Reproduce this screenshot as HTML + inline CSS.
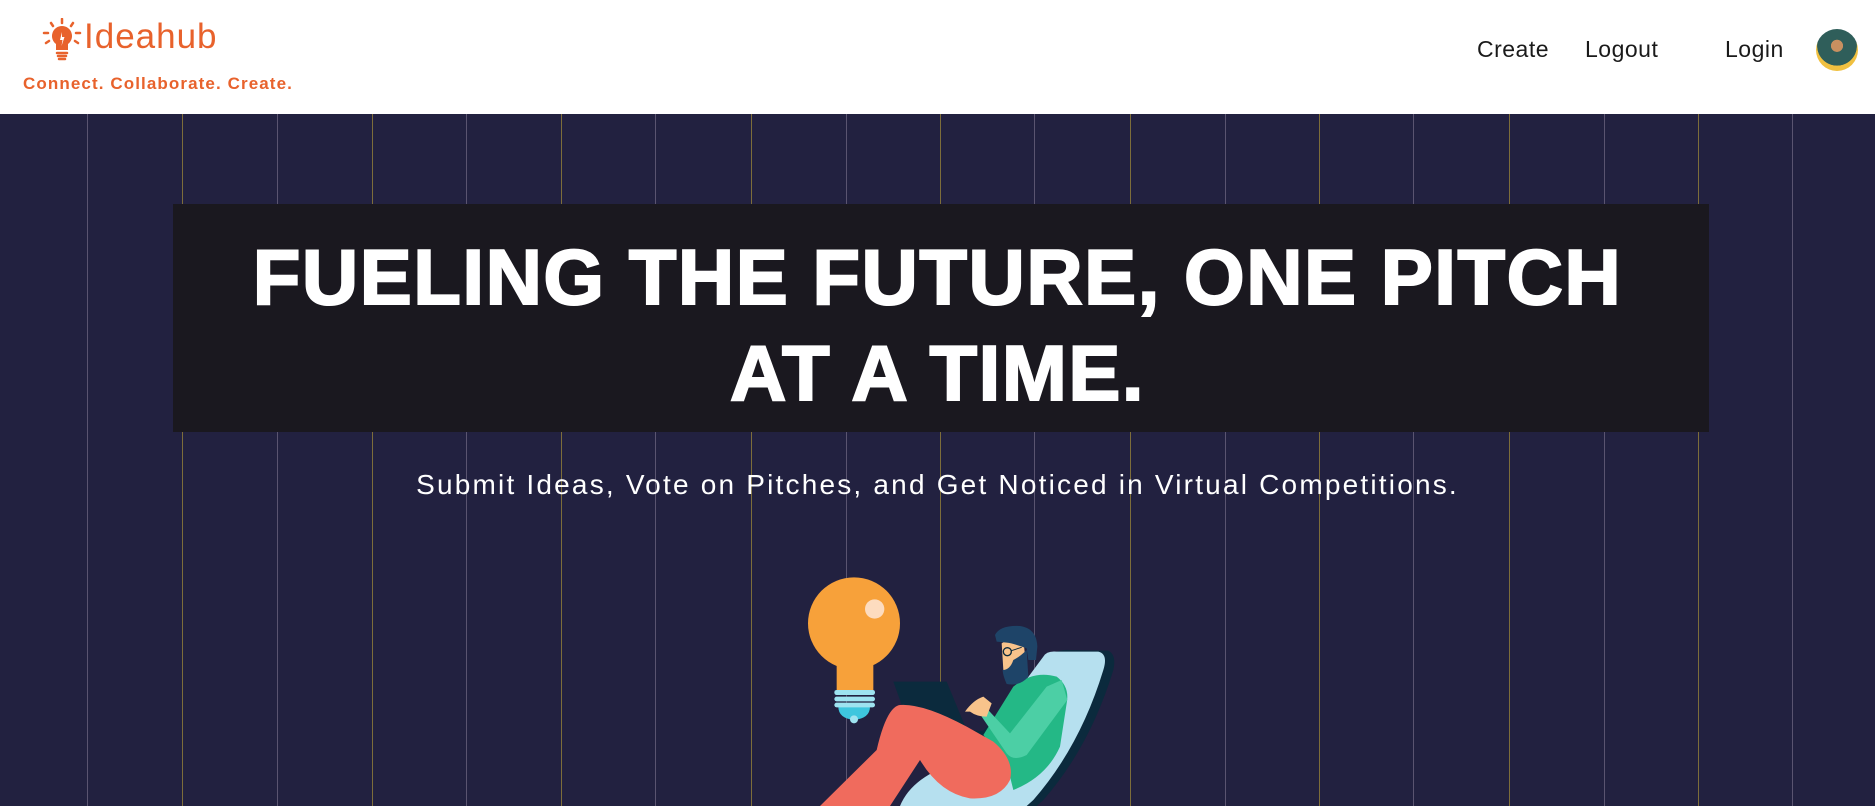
<!DOCTYPE html>
<html><head><meta charset="utf-8"><style>
*{margin:0;padding:0;box-sizing:border-box}
body{width:1875px;height:806px;overflow:hidden;background:#fff;font-family:"Liberation Sans",sans-serif;position:relative}
.hdr{position:absolute;left:0;top:0;width:1875px;height:114px;background:#fff}
.logo{position:absolute;left:84px;top:17px;font-size:35px;color:#e8622c;letter-spacing:1px}
.tag{position:absolute;left:23px;top:74px;font-size:17px;font-weight:bold;color:#e8622c;letter-spacing:1.1px}
.nav{position:absolute;top:36px;font-size:23px;color:#1a1a1a;letter-spacing:0.5px}
.hero{position:absolute;left:0;top:114px;width:1875px;height:692px;background:#222140;overflow:hidden}
.ln{position:absolute;top:0;width:1px;height:692px}
.box{position:absolute;left:173px;top:90px;width:1536px;height:228px;background:#1a181f}
.title{position:absolute;left:0;width:1875px;text-align:center;color:#fff;font-weight:900;font-size:78px;letter-spacing:1.5px;white-space:nowrap;-webkit-text-stroke:2px #fff}
.sub{position:absolute;left:0;top:355px;width:1875px;text-align:center;color:#fff;font-size:28px;letter-spacing:2.2px;white-space:nowrap}
</style></head><body>
<div class="hdr">
<svg style="position:absolute;left:42px;top:18px" width="40" height="44" viewBox="0 0 40 44">
<g stroke="#e8622c" stroke-width="2.5" stroke-linecap="round">
<line x1="20" y1="1" x2="20" y2="5"/><line x1="9" y1="5" x2="11" y2="8"/><line x1="31" y1="5" x2="29" y2="8"/>
<line x1="2" y1="15" x2="6" y2="15"/><line x1="34" y1="15" x2="38" y2="15"/><line x1="4" y1="25" x2="7" y2="23"/><line x1="36" y1="25" x2="33" y2="23"/>
<line x1="15" y1="35" x2="25" y2="35"/><line x1="16" y1="38" x2="24" y2="38"/><line x1="17" y1="41" x2="23" y2="41"/></g>
<path d="M20 8a10 10 0 0 0-6 18v6h12v-6a10 10 0 0 0-6-18z" fill="#e8622c"/>
<path d="M20 14l-2 8h2.5l-1 6 3-9h-2.5z" fill="#fff"/>
</svg>
<div class="logo">Ideahub</div>
<div class="tag">Connect. Collaborate. Create.</div>
<div class="nav" style="left:1477px">Create</div>
<div class="nav" style="left:1585px">Logout</div>
<div class="nav" style="left:1725px">Login</div>
<div style="position:absolute;left:1816px;top:29px;width:42px;height:42px;border-radius:50%;background:radial-gradient(circle at 50% 40%,#c89060 0 18%,#2f5e5a 19% 60%,#f0c040 61%);overflow:hidden"></div>
</div>
<div class="hero">
<div class="ln" style="left:87px;background:#5a5470"></div>
<div class="ln" style="left:182px;background:#7d6d3a"></div>
<div class="ln" style="left:277px;background:#5a5470"></div>
<div class="ln" style="left:372px;background:#7d6d3a"></div>
<div class="ln" style="left:466px;background:#5a5470"></div>
<div class="ln" style="left:561px;background:#7d6d3a"></div>
<div class="ln" style="left:655px;background:#5a5470"></div>
<div class="ln" style="left:751px;background:#7d6d3a"></div>
<div class="ln" style="left:846px;background:#5a5470"></div>
<div class="ln" style="left:940px;background:#7d6d3a"></div>
<div class="ln" style="left:1034px;background:#5a5470"></div>
<div class="ln" style="left:1130px;background:#7d6d3a"></div>
<div class="ln" style="left:1225px;background:#5a5470"></div>
<div class="ln" style="left:1319px;background:#7d6d3a"></div>
<div class="ln" style="left:1413px;background:#5a5470"></div>
<div class="ln" style="left:1509px;background:#7d6d3a"></div>
<div class="ln" style="left:1604px;background:#5a5470"></div>
<div class="ln" style="left:1698px;background:#7d6d3a"></div>
<div class="ln" style="left:1792px;background:#5a5470"></div>
<div class="box"></div>
<div class="title" style="top:118px">FUELING THE FUTURE, ONE PITCH</div>
<div class="title" style="top:214px">AT A TIME.</div>
<div class="sub">Submit Ideas, Vote on Pitches, and Get Noticed in Virtual Competitions.</div>
<svg style="position:absolute;left:780px;top:446px" width="360" height="246" viewBox="0 0 1080 738">
<circle cx="222" cy="190" r="138" fill="#f7a13a"/>
<rect x="170" y="260" width="110" height="135" fill="#f7a13a"/>
<circle cx="284" cy="147" r="29" fill="#fddcbf"/>
<path d="M175 440h95q0 35-48 40q-47-5-47-40z" fill="#3ec6de"/>
<circle cx="222" cy="478" r="12" fill="#9ee3f0"/>
<rect x="163" y="390" width="122" height="15" rx="7" fill="#9ee3f0"/>
<rect x="163" y="410" width="122" height="14" rx="7" fill="#9ee3f0"/>
<rect x="163" y="428" width="122" height="14" rx="7" fill="#9ee3f0"/>
<path d="M820 285Q830 268 870 270L985 272Q1010 285 1000 330Q930 560 790 720L770 738L400 738Z" fill="#0b2a3d"/>
<path d="M790 290Q800 272 830 275L955 275Q985 282 970 330Q900 560 760 720L740 738L360 738Q400 640 560 600Z" fill="#b6e0ef"/>
<path d="M340 365L500 365L560 510L650 515L650 532L400 532Z" fill="#0b2a3d"/>
<path d="M610 525L700 380Q760 330 830 350Q870 380 860 430L840 560Q800 650 700 690L680 610Z" fill="#24b886"/>
<path d="M120 738L290 570Q320 440 360 435Q430 430 560 500L640 545Q705 600 690 660Q660 720 570 715Q480 700 420 600L330 738Z" fill="#f06b5d"/>
<path d="M620 445L690 520L800 380L845 360L862 420L740 585Q700 605 680 580L605 470Z" fill="#4ccfa5"/>
<path d="M555 455Q580 420 610 410L635 430L620 470Q590 470 570 455Z" fill="#f8c38b"/>
<path d="M665 250Q690 230 730 235L740 340Q700 350 670 330Z" fill="#f8c38b"/>
<path d="M645 225Q660 195 720 198Q770 205 772 260L768 300L745 300L740 265Q700 250 680 248L650 245Z" fill="#1e4468"/>
<path d="M700 300Q720 290 740 270L745 350Q720 380 680 372Q668 345 668 330Q690 330 700 300Z" fill="#1e4468"/>
<circle cx="682" cy="275" r="12" fill="none" stroke="#0b2a3d" stroke-width="4"/>
<line x1="694" y1="272" x2="725" y2="262" stroke="#0b2a3d" stroke-width="3"/>
</svg>
</div>
</body></html>
